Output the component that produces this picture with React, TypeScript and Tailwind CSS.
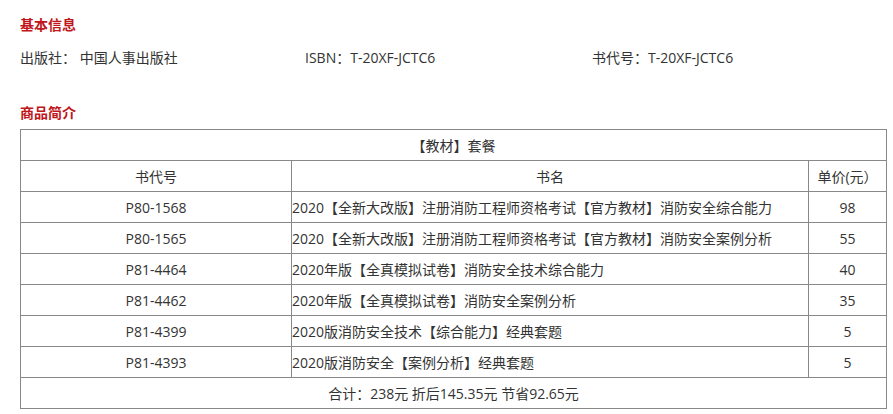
const font = { fontFamily: '"Open Sans", "Noto Sans CJK SC", sans-serif' };

const books = [
  { code: 'P80-1568', name: '2020【全新大改版】注册消防工程师资格考试【官方教材】消防安全综合能力', price: '98' },
  { code: 'P80-1565', name: '2020【全新大改版】注册消防工程师资格考试【官方教材】消防安全案例分析', price: '55' },
  { code: 'P81-4464', name: '2020年版【全真模拟试卷】消防安全技术综合能力', price: '40' },
  { code: 'P81-4462', name: '2020年版【全真模拟试卷】消防安全案例分析', price: '35' },
  { code: 'P81-4399', name: '2020版消防安全技术【综合能力】经典套题', price: '5' },
  { code: 'P81-4393', name: '2020版消防安全【案例分析】经典套题', price: '5' },
];

export default function App() {
  return (
    <div className="w-[893px] h-[414px] bg-white text-[#333] text-[14px] px-[20px] pt-[15px]" style={font}>
      <h2 className="text-[14px] leading-[20px] font-bold text-[#c0161b]">基本信息</h2>

      <div className="flex mt-[13px] leading-[20px]">
        <div className="w-[285px]">出版社： 中国人事出版社</div>
        <div className="w-[287px]">ISBN：T-20XF-JCTC6</div>
        <div>书代号：T-20XF-JCTC6</div>
      </div>

      <h2 className="mt-[35px] text-[14px] leading-[20px] font-bold text-[#c0161b]">商品简介</h2>

      {/* 套餐表 */}
      <table className="mt-[6px] w-[866px] border-collapse table-fixed">
        <colgroup>
          <col className="w-[271px]" />
          <col className="w-[517px]" />
          <col className="w-[78px]" />
        </colgroup>
        <tbody>
          <tr className="h-[31px]">
            <td colSpan={3} className="border border-[#888] text-center p-0">【教材】套餐</td>
          </tr>
          <tr className="h-[31px]">
            <td className="border border-[#888] text-center p-0">书代号</td>
            <td className="border border-[#888] text-center p-0">书名</td>
            <td className="border border-[#888] text-center p-0">单价(元）</td>
          </tr>
          {books.map((b) => (
            <tr key={b.code} className="h-[31px]">
              <td className="border border-[#888] text-center p-0">{b.code}</td>
              <td className="border border-[#888] text-left p-0 whitespace-nowrap">{b.name}</td>
              <td className="border border-[#888] text-center p-0">{b.price}</td>
            </tr>
          ))}
          <tr className="h-[31px]">
            <td colSpan={3} className="border border-[#888] text-center p-0">合计：238元 折后145.35元 节省92.65元</td>
          </tr>
        </tbody>
      </table>
    </div>
  );
}
